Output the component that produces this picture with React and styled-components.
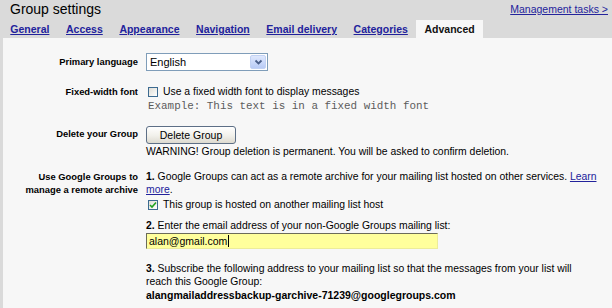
import styled, { createGlobalStyle } from 'styled-components';

const GlobalStyle = createGlobalStyle`
	html, body {
		margin: 0;
		padding: 0;
		background: #dadada;
	}
	body {
		font-family: "Liberation Sans", Arial, sans-serif;
		color: #000;
	}
`;

const Page = styled.div`
	display: flex;
	flex-direction: column;
	width: 612px;
	height: 308px;
	overflow: hidden;
	background: #dadada;
`;

const Header = styled.header`
	display: flex;
	justify-content: space-between;
	align-items: flex-start;
	height: 20px;
	padding: 0 4px 0 10px;
`;

const Title = styled.h1`
	margin: 0;
	font-size: 14px;
	font-weight: normal;
	line-height: 18px;
`;

const TopLink = styled.a`
	margin-top: 3px;
	font-size: 10.5px;
	line-height: 13px;
	color: #24249c;
	text-decoration: underline;
	cursor: pointer;
`;

const Tabs = styled.nav`
	display: flex;
	height: 18px;
	padding-left: 2px;
`;

const Tab = styled.a`
	padding: 0 8.3px;
	font-size: 10.5px;
	font-weight: bold;
	line-height: 18px;
	white-space: nowrap;
	cursor: pointer;
	color: ${(p) => (p.$active ? '#111' : '#22229c')};
	text-decoration: ${(p) => (p.$active ? 'none' : 'underline')};
	background: ${(p) => (p.$active ? '#f7f7f7' : 'transparent')};
`;

const Panel = styled.main`
	flex: 1;
	margin-left: 3px;
	padding-top: 15px;
	background: #f7f7f7;
`;

const Row = styled.section`
	display: grid;
	grid-template-columns: 135px 458px;
	column-gap: 8px;
	align-items: start;
	margin-top: ${(p) => p.$gap || 0}px;
`;

const Label = styled.div`
	padding: ${(p) => p.$top || 0}px 0 0 10px;
	text-align: right;
	font-size: 9.4px;
	font-weight: bold;
	line-height: ${(p) => p.$lh || 13}px;
`;

const Field = styled.div`
	font-size: 10.4px;
	line-height: ${(p) => p.$lh || 13}px;
`;

const Line = styled.div`
	display: flex;
	align-items: center;
	margin-top: ${(p) => p.$gap || 0}px;
`;

const Text = styled.p`
	margin: ${(p) => p.$gap || 0}px 0 0;
`;

const Num = styled.b`
	font-weight: bold;
`;

const Link = styled.a`
	color: #22229c;
	text-decoration: underline;
	cursor: pointer;
`;

const Select = styled.div`
	display: flex;
	width: 122px;
	height: 18px;
	box-sizing: border-box;
	border: 1px solid #7f9db9;
	background: #fff;
`;

const SelectValue = styled.span`
	flex: 1;
	padding-left: 3px;
	font-size: 11px;
	line-height: 16px;
`;

const SelectArrow = styled.span`
	display: flex;
	align-items: center;
	justify-content: center;
	width: 14px;
	margin: 1px;
	border: 1px solid #c2d2f4;
	border-radius: 2px;
	background: linear-gradient(#dfe8fd, #b8cbf6);
`;

const Check = styled.span`
	display: inline-flex;
	align-items: center;
	justify-content: center;
	flex: none;
	width: 10px;
	height: 10px;
	box-sizing: border-box;
	margin: 0 5px 0 2px;
	border: 1px solid #3c6a90;
	background: linear-gradient(135deg, #dedcd4, #ffffff);
`;

const Example = styled.div`
	padding-left: 2px;
	font-family: "Liberation Mono", "Courier New", monospace;
	font-size: 10.9px;
	color: #5c5c5c;
`;

const Button = styled.button`
	display: block;
	width: 90px;
	height: 18px;
	padding: 0;
	border: 1px solid #5d6f86;
	border-radius: 3px;
	background: linear-gradient(#ffffff, #f1f0ea 55%, #dddad0);
	font-family: inherit;
	font-size: 10.5px;
	color: #000;
`;

const EmailField = styled.div`
	display: flex;
	align-items: center;
	width: 292px;
	height: 16px;
	box-sizing: border-box;
	margin-top: 1px;
	padding-left: 2px;
	border-top: 1px solid #6b6b5a;
	border-left: 1px solid #6b6b5a;
	border-right: 1px solid #ecec9a;
	border-bottom: 1px solid #ecec9a;
	background: #ffff9c;
	font-size: 10.5px;
`;

const Caret = styled.span`
	width: 1px;
	height: 12px;
	margin-left: 1px;
	background: #000;
`;

const Address = styled.div`
	margin-top: 1px;
	font-weight: bold;
	font-size: 10.5px;
`;

const tabs = ['General', 'Access', 'Appearance', 'Navigation', 'Email delivery', 'Categories'];

const App = () => {
	return (
		<Page>
			<GlobalStyle />
			<Header>
				<Title>Group settings</Title>
				<TopLink>Management tasks &gt;</TopLink>
			</Header>
			<Tabs>
				{tabs.map((t) => (
					<Tab key={t}>{t}</Tab>
				))}
				<Tab $active>Advanced</Tab>
			</Tabs>
			<Panel>
				<Row>
					<Label $top={2}>Primary language</Label>
					<Select>
						<SelectValue>English</SelectValue>
						<SelectArrow>
							<svg width="9" height="7" viewBox="0 0 9 7">
								<path d="M1.5 1.5 L4.5 4.5 L7.5 1.5" fill="none" stroke="#4a5f8a" strokeWidth="1.8" />
							</svg>
						</SelectArrow>
					</Select>
				</Row>
				<Row $gap={14}>
					<Label $lh={14}>Fixed-width font</Label>
					<Field $lh={14}>
						<Line>
							<Check />
							Use a fixed width font to display messages
						</Line>
						<Example>Example: This text is in a fixed width font</Example>
					</Field>
				</Row>
				<Row $gap={13}>
					<Label $top={1}>Delete your Group</Label>
					<Field $lh={14}>
						<Button>Delete Group</Button>
						<Text $gap={1}>
							WARNING! Group deletion is permanent. You will be asked to confirm deletion.
						</Text>
					</Field>
				</Row>
				<Row $gap={11}>
					<Label>Use Google Groups to manage a remote archive</Label>
					<Field>
						<Text>
							<Num>1.</Num> Google Groups can act as a remote archive for your mailing list hosted on
							other services. <Link>Learn</Link> <Link>more</Link>.
						</Text>
						<Line $gap={2}>
							<Check>
								<svg width="8" height="8" viewBox="0 0 8 8">
									<path d="M1 4 L3 6 L7 1.5" fill="none" stroke="#21a121" strokeWidth="1.6" />
								</svg>
							</Check>
							This group is hosted on another mailing list host
						</Line>
						<Text $gap={8}>
							<Num>2.</Num> Enter the email address of your non-Google Groups mailing list:
						</Text>
						<EmailField>
							alan@gmail.com
							<Caret />
						</EmailField>
						<Text $gap={13}>
							<Num>3.</Num> Subscribe the following address to your mailing list so that the messages
							from your list will
							<br />
							reach this Google Group:
						</Text>
						<Address>alangmailaddressbackup-garchive-71239@googlegroups.com</Address>
					</Field>
				</Row>
			</Panel>
		</Page>
	);
};

export default App;
